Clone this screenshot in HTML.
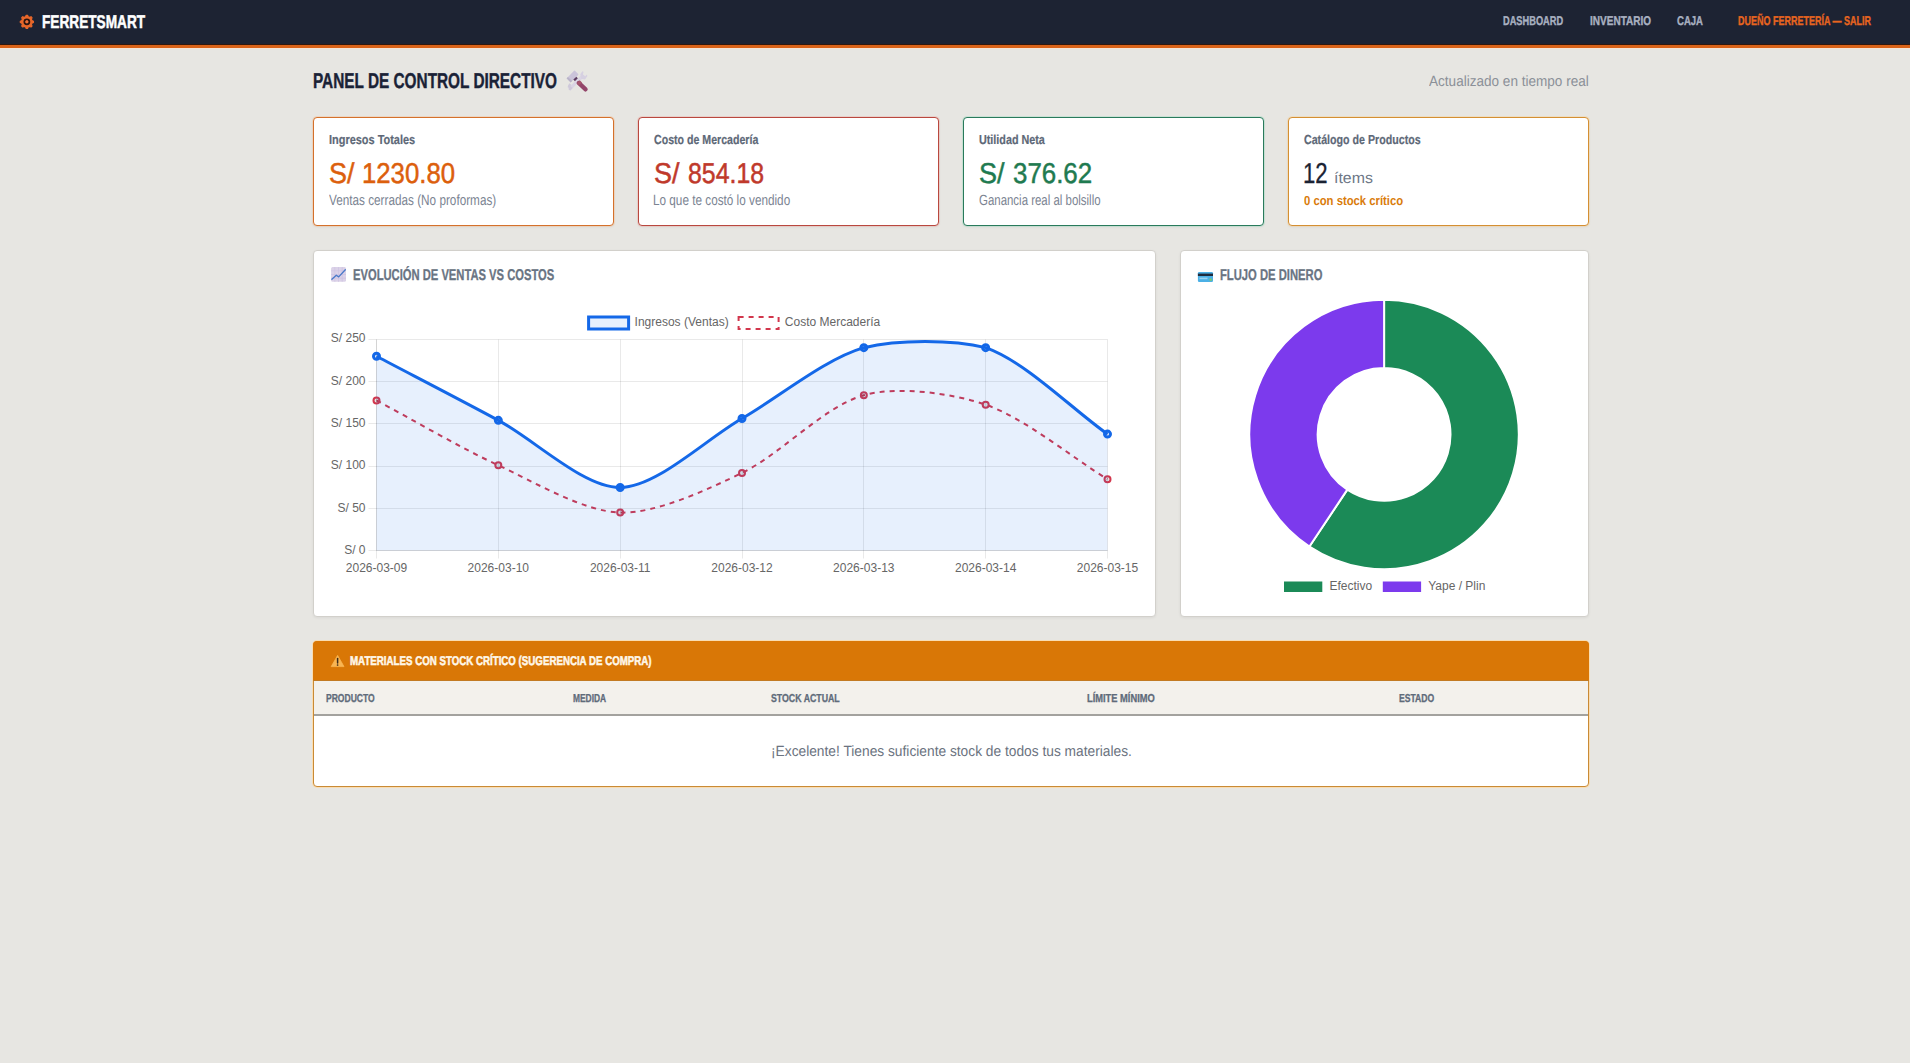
<!DOCTYPE html>
<html lang="es"><head><meta charset="utf-8"><title>FerretSmart - Panel de Control</title>
<style>
html,body{margin:0;padding:0}
body{width:1910px;height:1063px;overflow:hidden;position:relative;background:#e7e6e2;font-family:"Liberation Sans",sans-serif}
.nav{position:absolute;left:0;top:0;width:1910px;height:45px;background:#1d2333;border-bottom:3px solid #da6319}
.nav:before{content:'';position:absolute;left:0;top:44px;width:100%;height:1px;background:#33180d}
.nav:after{content:'';position:absolute;left:0;top:48px;width:100%;height:1px;background:#f7e5d7}
.card{position:absolute;box-sizing:border-box;background:#fff;border-radius:4px;box-shadow:0 1px 3px rgba(0,0,0,0.07)}
.t{position:absolute;white-space:nowrap;transform-origin:0 0;display:block;text-rendering:geometricPrecision}
svg.ov{position:absolute;left:0;top:0}
.ct{font-family:"Liberation Sans",sans-serif;font-size:12px;fill:#666}
.thead{position:absolute;left:314px;top:681px;width:1274px;height:33px;background:#f3f1ec;border-bottom:2px solid #a3a29e}
.tcap{position:absolute;left:313px;top:641px;width:1276px;height:39px;background:#d97706;border-radius:4px 4px 0 0;border-bottom:1px solid #c27a22}
</style></head><body>
<div class="nav"></div>
<div class="card" style="left:313px;top:117px;width:301px;height:109px;border:1px solid #d4712c;box-shadow:0 0 0 1px rgba(250,190,140,0.35),0 1px 3px rgba(0,0,0,0.06)"></div>
<div class="card" style="left:638px;top:117px;width:301px;height:109px;border:1px solid #b9483f;box-shadow:0 0 0 1px rgba(240,170,160,0.35),0 1px 3px rgba(0,0,0,0.06)"></div>
<div class="card" style="left:963px;top:117px;width:301px;height:109px;border:1px solid #2a7a5c;box-shadow:0 0 0 1px rgba(150,220,190,0.35),0 1px 3px rgba(0,0,0,0.06)"></div>
<div class="card" style="left:1288px;top:117px;width:301px;height:109px;border:1px solid #d48f33;box-shadow:0 0 0 1px rgba(250,210,150,0.4),0 1px 3px rgba(0,0,0,0.06)"></div>
<div class="card" style="left:313px;top:250px;width:843px;height:367px;border:1px solid #d2d0cb;box-shadow:0 1px 3px rgba(0,0,0,0.06)"></div>
<div class="card" style="left:1180px;top:250px;width:409px;height:367px;border:1px solid #d2d0cb;box-shadow:0 1px 3px rgba(0,0,0,0.06)"></div>
<div class="card" style="left:313px;top:641px;width:1276px;height:146px;border:1px solid #c98a35;box-shadow:0 0 0 1px rgba(252,218,170,0.85)"></div>
<div class="tcap"></div>
<div class="thead"></div>
<span class="t" style="left:42.21px;top:13px;font-size:18.46px;line-height:18.46px;font-weight:bold;color:#ffffff;transform:scaleX(0.7401);-webkit-text-stroke:0.5px #ffffff;">FERRETSMART</span>
<span class="t" style="left:1503.38px;top:15px;font-size:12.78px;line-height:12.78px;font-weight:bold;color:#a9b1c1;transform:scaleX(0.7244);-webkit-text-stroke:0.35px #a9b1c1;">DASHBOARD</span>
<span class="t" style="left:1589.77px;top:15px;font-size:12.78px;line-height:12.78px;font-weight:bold;color:#a9b1c1;transform:scaleX(0.7855);-webkit-text-stroke:0.35px #a9b1c1;">INVENTARIO</span>
<span class="t" style="left:1677.17px;top:15px;font-size:12.78px;line-height:12.78px;font-weight:bold;color:#a9b1c1;transform:scaleX(0.7485);-webkit-text-stroke:0.35px #a9b1c1;">CAJA</span>
<span class="t" style="left:1737.88px;top:15px;font-size:12.78px;line-height:12.78px;font-weight:bold;color:#e8651f;transform:scaleX(0.7045);-webkit-text-stroke:0.35px #e8651f;">DUEÑO FERRETERÍA — SALIR</span>
<span class="t" style="left:312.88px;top:71px;font-size:21.45px;line-height:21.45px;font-weight:bold;color:#1a2236;transform:scaleX(0.7164);-webkit-text-stroke:0.4px #1a2236;">PANEL DE CONTROL DIRECTIVO</span>
<span class="t" style="left:1429.40px;top:75px;font-size:14.75px;line-height:14.75px;font-weight:normal;color:#8b9098;transform:scaleX(0.9191);">Actualizado en tiempo real</span>
<span class="t" style="left:328.60px;top:133px;font-size:13.1px;line-height:13.1px;font-weight:bold;color:#5d6877;transform:scaleX(0.8356);-webkit-text-stroke:0.2px #5d6877;">Ingresos Totales</span>
<span class="t" style="left:329.11px;top:160px;font-size:28.63px;line-height:28.63px;font-weight:normal;color:#dc5f0d;transform:scaleX(0.9428);-webkit-text-stroke:0.5px #dc5f0d;">S/</span>
<span class="t" style="left:362.45px;top:160px;font-size:28.63px;line-height:28.63px;font-weight:normal;color:#dc5f0d;transform:scaleX(0.8990);-webkit-text-stroke:0.5px #dc5f0d;">1230.80</span>
<span class="t" style="left:329.00px;top:194px;font-size:14.75px;line-height:14.75px;font-weight:normal;color:#7b8492;transform:scaleX(0.7968);">Ventas cerradas (No proformas)</span>
<span class="t" style="left:654.00px;top:133px;font-size:13.1px;line-height:13.1px;font-weight:bold;color:#5d6877;transform:scaleX(0.8100);-webkit-text-stroke:0.2px #5d6877;">Costo de Mercadería</span>
<span class="t" style="left:654.11px;top:160px;font-size:28.63px;line-height:28.63px;font-weight:normal;color:#c0392b;transform:scaleX(0.9428);-webkit-text-stroke:0.5px #c0392b;">S/</span>
<span class="t" style="left:688.18px;top:160px;font-size:28.63px;line-height:28.63px;font-weight:normal;color:#c0392b;transform:scaleX(0.8688);-webkit-text-stroke:0.5px #c0392b;">854.18</span>
<span class="t" style="left:653.20px;top:194px;font-size:14.75px;line-height:14.75px;font-weight:normal;color:#7b8492;transform:scaleX(0.7965);">Lo que te costó lo vendido</span>
<span class="t" style="left:979.00px;top:133px;font-size:13.1px;line-height:13.1px;font-weight:bold;color:#5d6877;transform:scaleX(0.8223);-webkit-text-stroke:0.2px #5d6877;">Utilidad Neta</span>
<span class="t" style="left:979.11px;top:160px;font-size:28.63px;line-height:28.63px;font-weight:normal;color:#1f7a50;transform:scaleX(0.9428);-webkit-text-stroke:0.5px #1f7a50;">S/</span>
<span class="t" style="left:1013.15px;top:160px;font-size:28.63px;line-height:28.63px;font-weight:normal;color:#1f7a50;transform:scaleX(0.9039);-webkit-text-stroke:0.5px #1f7a50;">376.62</span>
<span class="t" style="left:979.00px;top:194px;font-size:14.75px;line-height:14.75px;font-weight:normal;color:#7b8492;transform:scaleX(0.7762);">Ganancia real al bolsillo</span>
<span class="t" style="left:1304.00px;top:133px;font-size:13.1px;line-height:13.1px;font-weight:bold;color:#5d6877;transform:scaleX(0.8138);-webkit-text-stroke:0.2px #5d6877;">Catálogo de Productos</span>
<span class="t" style="left:1303.01px;top:160px;font-size:28.81px;line-height:28.81px;font-weight:normal;color:#1a2233;transform:scaleX(0.7686);-webkit-text-stroke:0.3px #1a2233;">12</span>
<span class="t" style="left:1333.56px;top:171px;font-size:15.28px;line-height:15.28px;font-weight:normal;color:#6d7786;transform:scaleX(1.0412);">ítems</span>
<span class="t" style="left:1304.00px;top:194px;font-size:13.08px;line-height:13.08px;font-weight:bold;color:#d97c0b;transform:scaleX(0.8638);">0 con stock crítico</span>
<span class="t" style="left:353.14px;top:268px;font-size:15.73px;line-height:15.73px;font-weight:bold;color:#697483;transform:scaleX(0.7127);-webkit-text-stroke:0.3px #697483;">EVOLUCIÓN DE VENTAS VS COSTOS</span>
<span class="t" style="left:1220.03px;top:268px;font-size:15.73px;line-height:15.73px;font-weight:bold;color:#697483;transform:scaleX(0.7155);-webkit-text-stroke:0.3px #697483;">FLUJO DE DINERO</span>
<span class="t" style="left:350.15px;top:655px;font-size:12.65px;line-height:12.65px;font-weight:bold;color:#fff8ea;transform:scaleX(0.7687);-webkit-text-stroke:0.5px #fff8ea;">MATERIALES CON STOCK CRÍTICO (SUGERENCIA DE COMPRA)</span>
<span class="t" style="left:326.25px;top:694px;font-size:11.54px;line-height:11.54px;font-weight:bold;color:#5f6b7a;transform:scaleX(0.7401);-webkit-text-stroke:0.3px #5f6b7a;">PRODUCTO</span>
<span class="t" style="left:573.15px;top:694px;font-size:11.54px;line-height:11.54px;font-weight:bold;color:#5f6b7a;transform:scaleX(0.7280);-webkit-text-stroke:0.3px #5f6b7a;">MEDIDA</span>
<span class="t" style="left:771.05px;top:694px;font-size:11.54px;line-height:11.54px;font-weight:bold;color:#5f6b7a;transform:scaleX(0.7607);-webkit-text-stroke:0.3px #5f6b7a;">STOCK ACTUAL</span>
<span class="t" style="left:1087.45px;top:694px;font-size:11.54px;line-height:11.54px;font-weight:bold;color:#5f6b7a;transform:scaleX(0.8077);-webkit-text-stroke:0.3px #5f6b7a;">LÍMITE MÍNIMO</span>
<span class="t" style="left:1398.65px;top:694px;font-size:11.54px;line-height:11.54px;font-weight:bold;color:#5f6b7a;transform:scaleX(0.7475);-webkit-text-stroke:0.3px #5f6b7a;">ESTADO</span>
<span class="t" style="left:770.57px;top:745px;font-size:14.75px;line-height:14.75px;font-weight:normal;color:#6b7380;transform:scaleX(0.9326);">¡Excelente! Tienes suficiente stock de todos tus materiales.</span>
<svg class="ov" width="1910" height="1063" viewBox="0 0 1910 1063">
<line x1="368.5" y1="550.5" x2="1107.5" y2="550.5" stroke="rgba(0,0,0,0.085)" stroke-width="1"/>
<line x1="368.5" y1="508.5" x2="1107.5" y2="508.5" stroke="rgba(0,0,0,0.085)" stroke-width="1"/>
<line x1="368.5" y1="466.5" x2="1107.5" y2="466.5" stroke="rgba(0,0,0,0.085)" stroke-width="1"/>
<line x1="368.5" y1="423.5" x2="1107.5" y2="423.5" stroke="rgba(0,0,0,0.085)" stroke-width="1"/>
<line x1="368.5" y1="381.5" x2="1107.5" y2="381.5" stroke="rgba(0,0,0,0.085)" stroke-width="1"/>
<line x1="368.5" y1="339.5" x2="1107.5" y2="339.5" stroke="rgba(0,0,0,0.085)" stroke-width="1"/>
<line x1="376.5" y1="339.5" x2="376.5" y2="558.5" stroke="rgba(0,0,0,0.085)" stroke-width="1"/>
<line x1="498.5" y1="339.5" x2="498.5" y2="558.5" stroke="rgba(0,0,0,0.085)" stroke-width="1"/>
<line x1="620.5" y1="339.5" x2="620.5" y2="558.5" stroke="rgba(0,0,0,0.085)" stroke-width="1"/>
<line x1="742.5" y1="339.5" x2="742.5" y2="558.5" stroke="rgba(0,0,0,0.085)" stroke-width="1"/>
<line x1="863.5" y1="339.5" x2="863.5" y2="558.5" stroke="rgba(0,0,0,0.085)" stroke-width="1"/>
<line x1="985.5" y1="339.5" x2="985.5" y2="558.5" stroke="rgba(0,0,0,0.085)" stroke-width="1"/>
<line x1="1107.5" y1="339.5" x2="1107.5" y2="558.5" stroke="rgba(0,0,0,0.085)" stroke-width="1"/>
<line x1="376.5" y1="339.5" x2="376.5" y2="550.5" stroke="rgba(0,0,0,0.085)" stroke-width="1"/>
<line x1="376.5" y1="550.5" x2="1107.5" y2="550.5" stroke="rgba(0,0,0,0.085)" stroke-width="1"/>
<path d="M376.50,400.42 C413.05,419.89 460.78,448.04 498.33,465.32 C533.88,481.69 583.26,511.44 620.17,512.59 C656.36,513.72 707.65,489.47 742.00,472.92 C780.75,454.25 824.23,406.27 863.83,395.19 C897.33,385.81 951.95,393.11 985.67,404.73 C1025.05,418.30 1070.95,456.83 1107.50,479.17" fill="none" stroke="#d2374d" stroke-width="2" stroke-dasharray="5 5"/>
<circle cx="376.50" cy="400.42" r="3" fill="rgba(0,0,0,0.1)" stroke="#d2374d" stroke-width="2"/>
<circle cx="498.33" cy="465.32" r="3" fill="rgba(0,0,0,0.1)" stroke="#d2374d" stroke-width="2"/>
<circle cx="620.17" cy="512.59" r="3" fill="rgba(0,0,0,0.1)" stroke="#d2374d" stroke-width="2"/>
<circle cx="742.00" cy="472.92" r="3" fill="rgba(0,0,0,0.1)" stroke="#d2374d" stroke-width="2"/>
<circle cx="863.83" cy="395.19" r="3" fill="rgba(0,0,0,0.1)" stroke="#d2374d" stroke-width="2"/>
<circle cx="985.67" cy="404.73" r="3" fill="rgba(0,0,0,0.1)" stroke="#d2374d" stroke-width="2"/>
<circle cx="1107.50" cy="479.17" r="3" fill="rgba(0,0,0,0.1)" stroke="#d2374d" stroke-width="2"/>
<path d="M376.50,356.28 C413.05,375.50 461.98,400.76 498.33,420.34 C535.08,440.13 583.74,487.80 620.17,487.52 C656.84,487.24 705.56,439.39 742.00,418.48 C778.66,397.44 824.63,359.06 863.83,347.67 C897.73,339.40 952.83,339.40 985.67,347.67 C1025.93,361.95 1070.95,408.17 1107.50,434.10 L1107.50,550.40 L376.50,550.40 Z" fill="rgba(20,104,240,0.1)" stroke="none"/>
<path d="M376.50,356.28 C413.05,375.50 461.98,400.76 498.33,420.34 C535.08,440.13 583.74,487.80 620.17,487.52 C656.84,487.24 705.56,439.39 742.00,418.48 C778.66,397.44 824.63,359.06 863.83,347.67 C897.73,339.40 952.83,339.40 985.67,347.67 C1025.93,361.95 1070.95,408.17 1107.50,434.10" fill="none" stroke="#1468e8" stroke-width="3" stroke-linecap="butt" stroke-linejoin="miter"/>
<circle cx="376.50" cy="356.28" r="3" fill="rgba(20,104,240,0.1)" stroke="#1468e8" stroke-width="3"/>
<circle cx="498.33" cy="420.34" r="3" fill="rgba(20,104,240,0.1)" stroke="#1468e8" stroke-width="3"/>
<circle cx="620.17" cy="487.52" r="3" fill="rgba(20,104,240,0.1)" stroke="#1468e8" stroke-width="3"/>
<circle cx="742.00" cy="418.48" r="3" fill="rgba(20,104,240,0.1)" stroke="#1468e8" stroke-width="3"/>
<circle cx="863.83" cy="347.67" r="3" fill="rgba(20,104,240,0.1)" stroke="#1468e8" stroke-width="3"/>
<circle cx="985.67" cy="347.67" r="3" fill="rgba(20,104,240,0.1)" stroke="#1468e8" stroke-width="3"/>
<circle cx="1107.50" cy="434.10" r="3" fill="rgba(20,104,240,0.1)" stroke="#1468e8" stroke-width="3"/>
<text x="365.5" y="554.4" text-anchor="end" class="ct">S/ 0</text>
<text x="365.5" y="511.7" text-anchor="end" class="ct">S/ 50</text>
<text x="365.5" y="469.4" text-anchor="end" class="ct">S/ 100</text>
<text x="365.5" y="427.0" text-anchor="end" class="ct">S/ 150</text>
<text x="365.5" y="384.6" text-anchor="end" class="ct">S/ 200</text>
<text x="365.5" y="342.4" text-anchor="end" class="ct">S/ 250</text>
<text x="376.5" y="572.3" text-anchor="middle" class="ct">2026-03-09</text>
<text x="498.3" y="572.3" text-anchor="middle" class="ct">2026-03-10</text>
<text x="620.2" y="572.3" text-anchor="middle" class="ct">2026-03-11</text>
<text x="742.0" y="572.3" text-anchor="middle" class="ct">2026-03-12</text>
<text x="863.8" y="572.3" text-anchor="middle" class="ct">2026-03-13</text>
<text x="985.7" y="572.3" text-anchor="middle" class="ct">2026-03-14</text>
<text x="1107.5" y="572.3" text-anchor="middle" class="ct">2026-03-15</text>
<rect x="588.6" y="317.0" width="40" height="12" fill="rgba(20,104,240,0.1)" stroke="#1468e8" stroke-width="3"/>
<text x="634.6" y="325.8" class="ct">Ingresos (Ventas)</text>
<rect x="738.6" y="317.0" width="40" height="12" fill="none" stroke="#d2374d" stroke-width="2" stroke-dasharray="5 5"/>
<text x="784.8" y="325.8" class="ct">Costo Mercadería</text>
<path d="M1384.10,299.70 A134.7,134.7 0 1 1 1309.44,546.52 L1347.30,489.67 A66.4,66.4 0 1 0 1384.10,368.00 Z" fill="#1b8a57" stroke="#fff" stroke-width="2" stroke-linejoin="round" paint-order="fill"/>
<path d="M1309.44,546.52 A134.7,134.7 0 0 1 1384.10,299.70 L1384.10,368.00 A66.4,66.4 0 0 0 1347.30,489.67 Z" fill="#7c3aed" stroke="#fff" stroke-width="2" stroke-linejoin="round" paint-order="fill"/>
<rect x="1284" y="581.5" width="38.3" height="10.5" fill="#1b8a57"/>
<text x="1329.4" y="589.9" class="ct">Efectivo</text>
<rect x="1382.8" y="581.5" width="38.3" height="10.5" fill="#7c3aed"/>
<text x="1428.2" y="589.9" class="ct">Yape / Plin</text>
<path d="M26.20,15.28 L27.54,15.28 L28.20,16.82 L29.48,17.35 L31.04,16.73 L31.99,17.68 L31.37,19.24 L31.90,20.52 L33.44,21.18 L33.44,22.52 L31.90,23.18 L31.37,24.46 L31.99,26.02 L31.04,26.97 L29.48,26.35 L28.20,26.88 L27.54,28.42 L26.20,28.42 L25.54,26.88 L24.26,26.35 L22.70,26.97 L21.75,26.02 L22.37,24.46 L21.84,23.18 L20.30,22.52 L20.30,21.18 L21.84,20.52 L22.37,19.24 L21.75,17.68 L22.70,16.73 L24.26,17.35 L25.54,16.82 Z" fill="#e8672a" stroke="#e8672a" stroke-width="1.2" stroke-linejoin="round"/><circle cx="26.87" cy="21.85" r="2.45" fill="none" stroke="#2a1410" stroke-width="1.9"/><circle cx="26.87" cy="21.85" r="1.5" fill="#ec6f3a"/>
<g>
 <path d="M569.2,89.4 L583.6,75" stroke="#dad4e4" stroke-width="3.2" stroke-linecap="butt" fill="none"/>
 <path d="M580.2,74.2 l2.2,-3 l1.2,0.6 l-0.8,3 l2.4,1.4 l1.6,-1.8 l0.6,1.6 l-2.4,3.6 l-3.6,-0.6 Z" fill="#d6d0e1"/>
 <path d="M568.2,85.2 l1.2,-2 l1.6,1.2 l-0.4,2 l2,1.6 l-2.2,2.4 l-1.8,-0.6 l0.6,-1.8 l-1.6,-0.8 Z" fill="#cfc9da"/>
 <g transform="translate(572.6,76.4) rotate(-45)"><rect x="-5.6" y="-2.9" width="11.2" height="5.8" rx="0.6" fill="#cbc4da"/><rect x="-5.6" y="-2.9" width="2" height="5.8" fill="#b9b3c8"/></g>
 <g transform="translate(575.6,78.9) rotate(-45)"><rect x="-2.1" y="-1.1" width="4.2" height="2.2" fill="#5d3d63"/></g>
 <path d="M578.7,82.9 L585.6,89.4" stroke="#94466a" stroke-width="4.2" stroke-linecap="round" fill="none"/>
 <path d="M578.2,81.8 L580.6,84" stroke="#a5566c" stroke-width="4.2" stroke-linecap="butt" fill="none"/>
</g>
<g transform="translate(331.1,267.1)">
 <rect x="0" y="0" width="14.9" height="14.7" rx="1.5" fill="#dbd2e8"/>
 <path d="M3.7,0V14.7M7.4,0V14.7M11.1,0V14.7M0,3.7H14.9M0,7.4H14.9M0,11.1H14.9" stroke="#cbbfe0" stroke-width="0.6" fill="none"/>
 <path d="M0.8,12.2 L5.2,8.2 L7.6,9.8 L14.2,2.6" stroke="#4a79c9" stroke-width="1.35" fill="none" stroke-linecap="round" stroke-linejoin="round"/>
</g>
<g transform="translate(1197.9,272)">
 <rect x="0" y="0" width="15.1" height="10" rx="1.2" fill="#4bb0e6"/>
 <rect x="0" y="1.6" width="15.1" height="2.4" fill="#1f2b3d"/>
 <rect x="1.6" y="5.6" width="8" height="1.6" fill="#9ad4f2"/>
 <rect x="11.6" y="6.6" width="2.3" height="2.2" fill="#7bc96f"/>
</g>
<g transform="translate(331,655)">
 <path d="M6.6,0.4 L13,11.6 L0.2,11.6 Z" fill="#f9b552" stroke="#f9b552" stroke-width="0.8" stroke-linejoin="round"/>
 <path d="M6.6,3.6 V8" stroke="#3a2a1a" stroke-width="1.5" stroke-linecap="round"/>
 <circle cx="6.6" cy="10" r="0.85" fill="#3a2a1a"/>
</g>
</svg>
</body></html>
